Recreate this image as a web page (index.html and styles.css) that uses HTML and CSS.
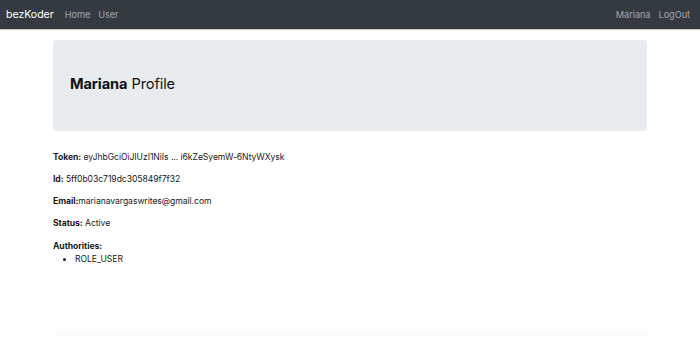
FILE: index.html
```html
<!DOCTYPE html>
<html lang="en">
<head>
    <meta charset="UTF-8">
    <title>bezKoder - Profile</title>
    <link rel="stylesheet" href="styles.css">
</head>
<body>
    <nav class="navbar">
        <a href="/" class="brand">bezKoder</a>
        <div class="nav-links">
            <a href="/home" class="nav-link">Home</a>
            <a href="/user" class="nav-link">User</a>
        </div>
        <div class="nav-links nav-right">
            <a href="/profile" class="nav-link">Mariana</a>
            <a href="/login" class="nav-link">LogOut</a>
        </div>
    </nav>

    <div class="container">
        <header class="jumbotron">
            <h3><strong>Mariana</strong> Profile</h3>
        </header>

        <p><strong>Token:</strong> eyJhbGciOiJIUzI1NiIs ... i6kZeSyemW-6NtyWXysk</p>
        <p><strong>Id:</strong> 5ff0b03c719dc305849f7f32</p>
        <p><strong>Email:</strong>marianavargaswrites@gmail.com</p>
        <p><strong>Status:</strong> Active</p>
        <p class="label"><strong>Authorities:</strong></p>
        <ul class="roles">
            <li>ROLE_USER</li>
        </ul>

        <div class="footer-card"></div>
    </div>
</body>
</html>
```

FILE: styles.css
```css
html, body {
    overflow: hidden;
}

body {
    margin: 0;
    font-family: 'Inter', 'Liberation Sans', sans-serif;
    font-size: 8.6px;
    letter-spacing: -0.05px;
    color: #16191c;
    background: #fff;
    height: 338px;
}

.navbar {
    display: flex;
    align-items: center;
    height: 29px;
    padding: 0 6px;
    background: #343a40;
    border-bottom: 1px solid #c9cacc;
}

.brand {
    color: #fff;
    font-size: 10.6px;
    text-decoration: none;
    margin-right: 11px;
}

.nav-links {
    display: flex;
    gap: 8px;
}

.nav-right {
    margin-left: auto;
    margin-right: 4px;
}

.nav-link {
    color: rgba(255, 255, 255, 0.55);
    text-decoration: none;
    font-size: 9.2px;
}

.container {
    width: 594px;
    margin: 0 auto;
}

.jumbotron {
    display: flex;
    align-items: center;
    height: 88px;
    margin-top: 10px;
    padding: 0 17px 3px;
    background: #e9ecef;
    border-radius: 3px;
    margin-bottom: 20px;
}

.jumbotron h3 {
    margin: 0;
    font-size: 14.6px;
    font-weight: 400;
    letter-spacing: -0.1px;
    color: #111;
}

.jumbotron strong {
    font-weight: 700;
}

p {
    margin: 0 0 9px;
    line-height: 13px;
}

p.label {
    margin-bottom: 0;
    padding-top: 1px;
}

strong {
    font-weight: 700;
}

.roles {
    margin: 0;
    padding-left: 22px;
    line-height: 13px;
}

.footer-card {
    height: 4px;
    margin-top: 70px;
    background: #fff;
    box-shadow: 0 0 14px rgba(0, 0, 0, 0.1);
}
```
